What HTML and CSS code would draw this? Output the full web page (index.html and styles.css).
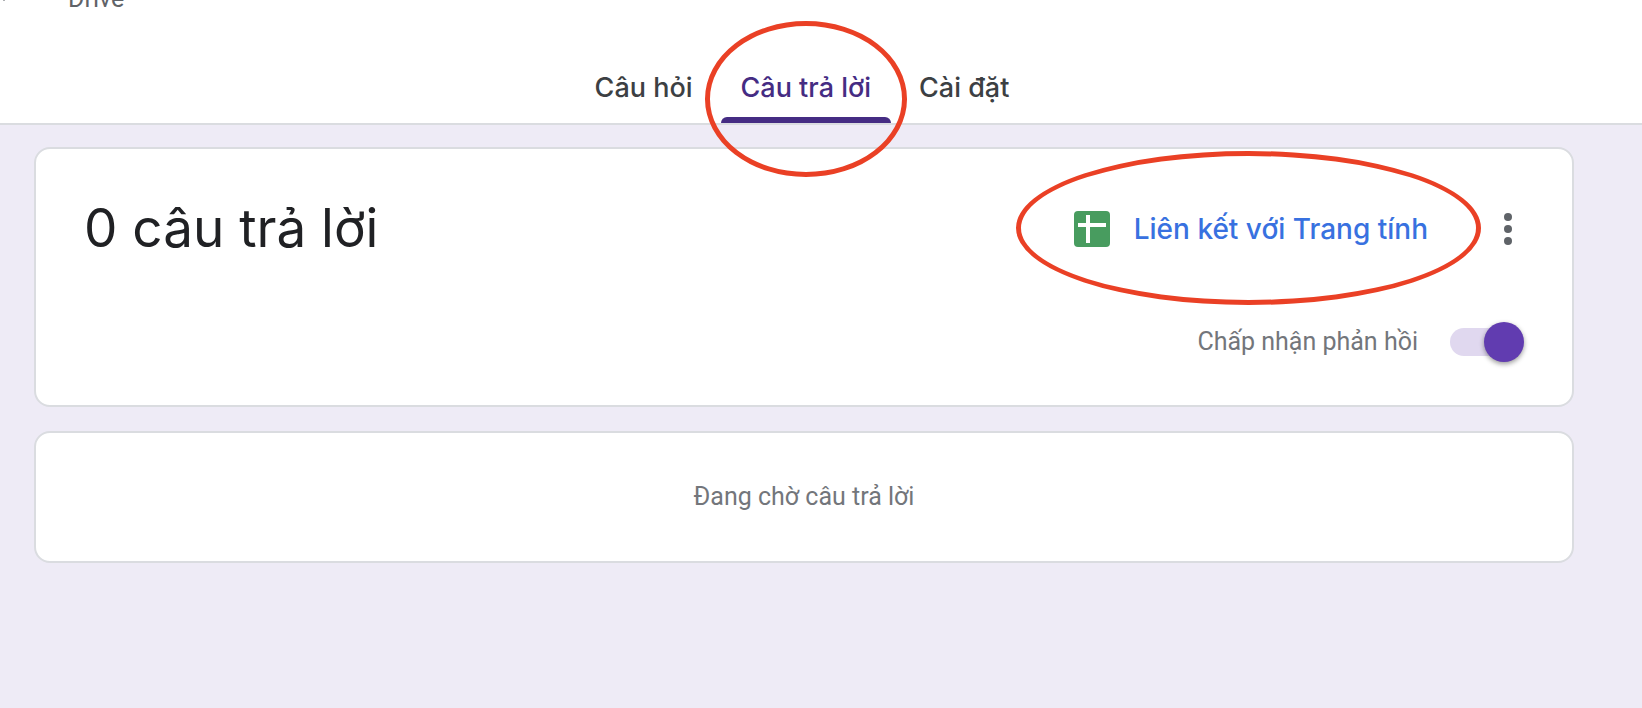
FILE: index.html
```html
<!DOCTYPE html>
<html lang="vi">
<head>
<meta charset="utf-8">
<meta name="viewport" content="width=device-width, initial-scale=1">
<title>Câu trả lời</title>
<link rel="stylesheet" href="styles.css">
</head>
<body>
<header class="header">
  <div class="save-status">
    <svg class="save-mark" width="8" height="2" viewBox="0 0 8 2" aria-hidden="true"><path d="M3 0h2l-1 1z" fill="#5f6368"/></svg>
    <span>Drive</span>
  </div>
  <nav class="tabs" role="tablist">
    <button class="tab" type="button" role="tab">Câu hỏi</button>
    <button class="tab tab-active" type="button" role="tab" aria-selected="true">Câu trả lời<span class="ring ring-tab"></span></button>
    <button class="tab" type="button" role="tab">Cài đặt</button>
  </nav>
</header>
<main class="main">
  <section class="card summary">
    <div class="row">
      <h1 class="title">0 câu trả lời</h1>
      <div class="actions">
        <button class="link-sheet" type="button">
          <svg width="36" height="36" viewBox="0 0 36 36" aria-hidden="true"><rect width="36" height="36" rx="4" fill="#489c5f"/><path d="M4 12h8V4h4v8h16v4H16v16h-4V16H4z" fill="#fff"/></svg>
          <span>Liên kết với Trang tính</span>
          <span class="ring ring-link"></span>
        </button>
        <button class="more" type="button" aria-label="Tùy chọn khác">
          <svg width="32" height="48" viewBox="0 0 32 48" fill="#5f6368" aria-hidden="true"><circle cx="16" cy="12" r="4"/><circle cx="16" cy="24" r="4"/><circle cx="16" cy="36" r="4"/></svg>
        </button>
      </div>
    </div>
    <div class="accept">
      <label for="accept">Chấp nhận phản hồi</label>
      <input class="switch" id="accept" type="checkbox" role="switch" checked>
    </div>
  </section>
  <section class="card waiting">
    <p>Đang chờ câu trả lời</p>
  </section>
</main>
</body>
</html>
```
FILE: styles.css
```css
* { box-sizing: border-box; }

body {
  margin: 0;
  min-height: 100vh;
  background: #eeebf6;
  color: #202124;
  font-family: Roboto, "Liberation Sans", sans-serif;
}

button {
  border: 0;
  padding: 0;
  background: none;
  font: inherit;
  cursor: pointer;
}

.header {
  background: #fff;
  border-bottom: 2px solid #dadce0;
  padding-right: 38px;
}

.save-status {
  display: flex;
  align-items: flex-end;
  gap: 60px;
  height: 13px;
  overflow: hidden;
  color: #5f6368;
  font-size: 25px;
  line-height: 28px;
}

.save-mark { align-self: flex-start; }

.tabs {
  display: flex;
  justify-content: center;
  gap: 8px;
  padding-top: 38px;
}

.tab {
  position: relative;
  height: 72px;
  padding: 2px 20px 0;
  color: #3c4043;
  font-family: Inter, Roboto, sans-serif;
  font-size: 27px;
  line-height: 70px;
  font-weight: 500;
  white-space: nowrap;
}

.tab-active { color: #452c83; }

.tab-active::after {
  content: "";
  position: absolute;
  left: 0;
  right: 0;
  bottom: 0;
  height: 6px;
  border-radius: 6px 6px 0 0;
  background: #452c83;
}

.ring {
  position: absolute;
  z-index: 1;
  border: 5px solid #ea4025;
  border-radius: 50%;
  pointer-events: none;
}

.ring-tab { inset: -30px -16px -54px; }
.ring-link { inset: -54px -53px -52px -58px; }

.main {
  display: flex;
  flex-direction: column;
  gap: 24px;
  padding: 22px 68px 34px 34px;
}

.card {
  background: #fff;
  border: 2px solid #dadce0;
  border-radius: 16px;
}

.summary { padding: 48px 48px 42px; }

.row {
  display: flex;
  align-items: center;
  justify-content: space-between;
}

.title {
  margin: 0;
  padding-bottom: 2px;
  font-family: Inter, Roboto, sans-serif;
  font-size: 53px;
  line-height: 62px;
  font-weight: 400;
}

.actions {
  display: flex;
  align-items: center;
  gap: 64px;
}

.link-sheet {
  position: relative;
  display: flex;
  align-items: center;
  gap: 24px;
  height: 48px;
  color: #3871e0;
  font-family: Inter, Roboto, sans-serif;
  font-size: 28px;
  font-weight: 500;
  white-space: nowrap;
}

.more { height: 48px; }

.accept {
  display: flex;
  align-items: center;
  justify-content: flex-end;
  gap: 32px;
  margin-top: 60px;
  color: #73767b;
  font-size: 25px;
  line-height: 40px;
}

.switch {
  appearance: none;
  position: relative;
  width: 74px;
  height: 42px;
  margin: 0;
  cursor: pointer;
}

.switch::before {
  content: "";
  position: absolute;
  inset: 7px 6px 7px 0;
  border-radius: 14px;
  background: #e0d8ef;
}

.switch::after {
  content: "";
  position: absolute;
  top: 1px;
  right: 0;
  width: 40px;
  height: 40px;
  border-radius: 50%;
  background: #613cb0;
  box-shadow: 0 2px 5px rgba(0, 0, 0, 0.4);
}

.waiting {
  padding: 44px;
  color: #73767b;
  font-size: 25px;
  line-height: 40px;
  text-align: center;
}

.waiting p { margin: 0; }
```
